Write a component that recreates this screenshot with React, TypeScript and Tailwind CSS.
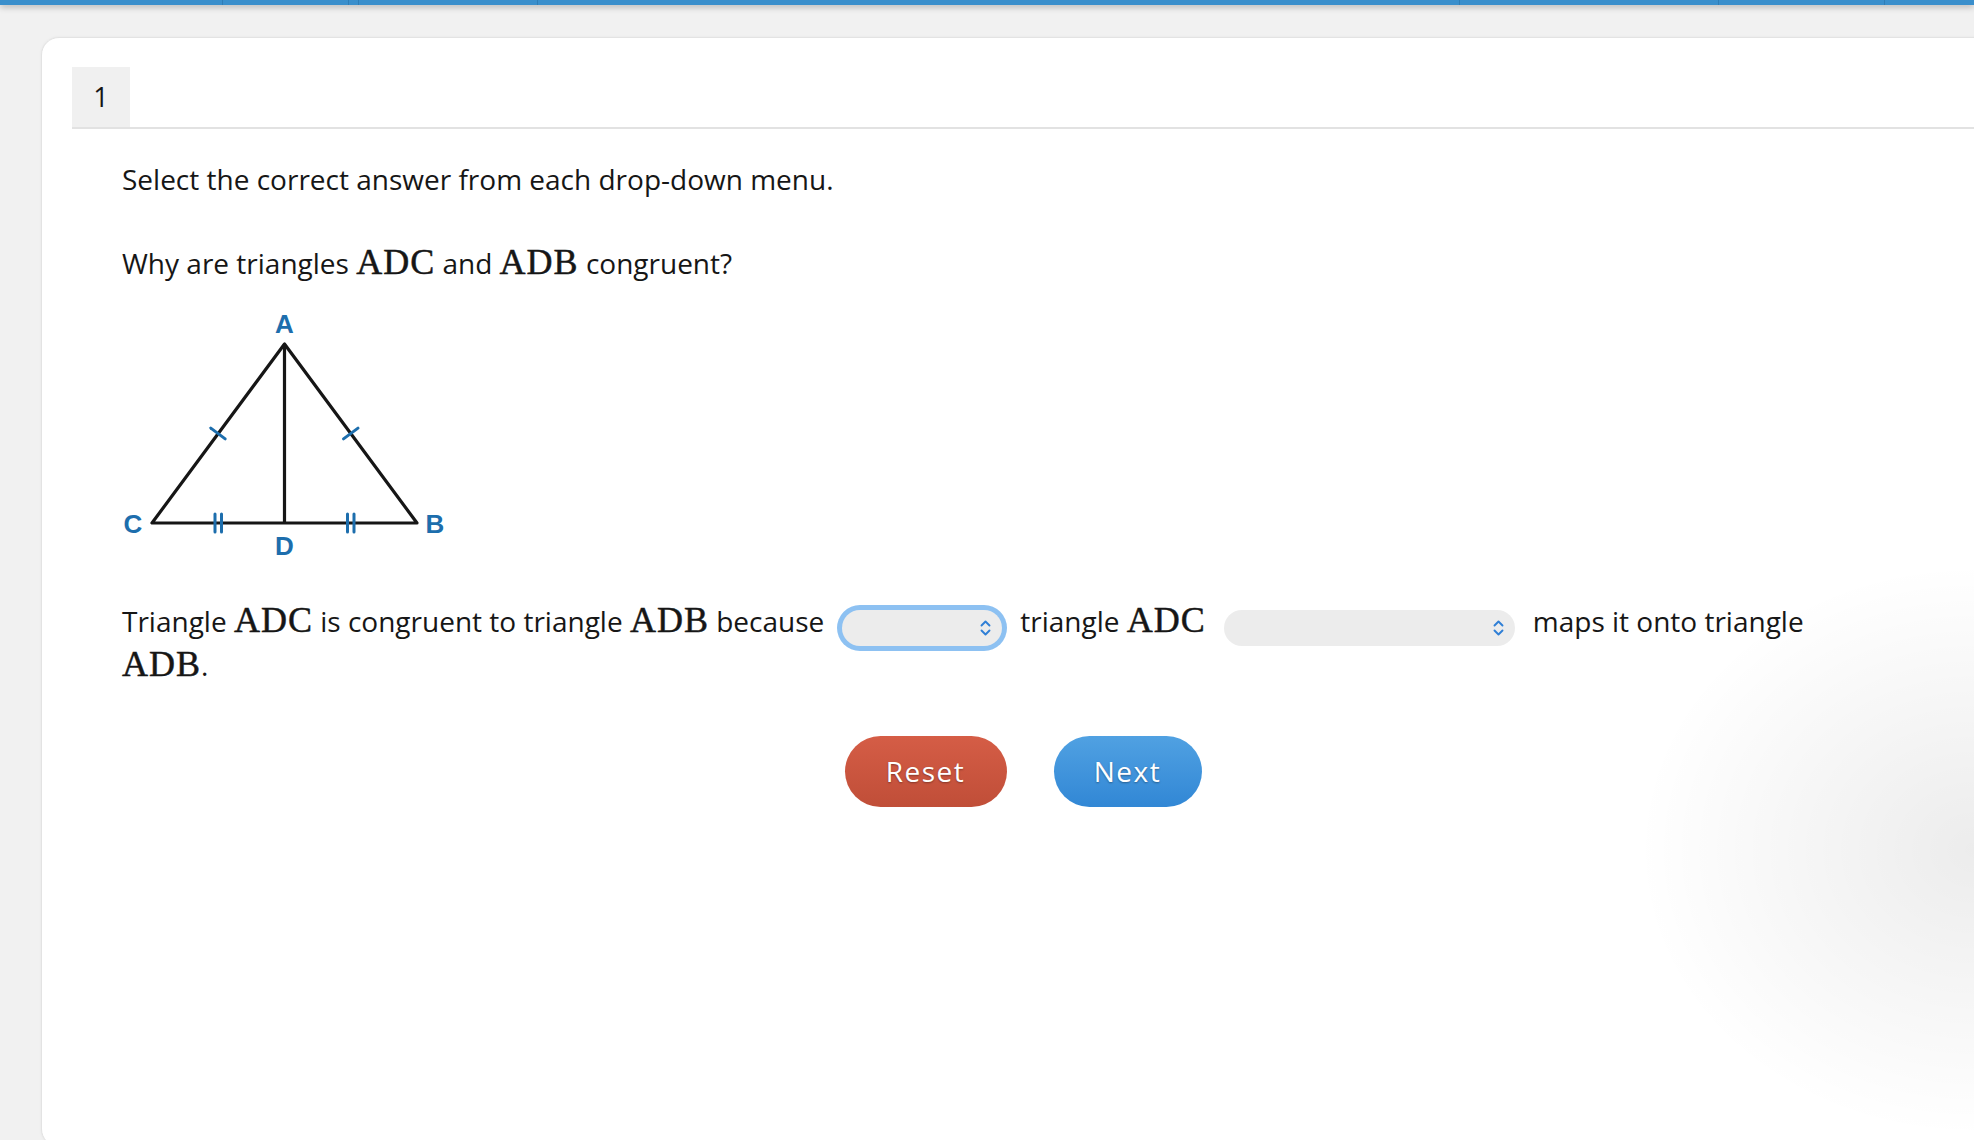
import React from 'react';

const Math: React.FC<{ children: React.ReactNode }> = ({ children }) => (
  <span className="font-['Liberation_Serif',serif] text-[36px] leading-none tracking-[1px] [-webkit-text-stroke:0.5px_#161616]">
    {children}
  </span>
);

const UpDown: React.FC = () => (
  <svg width="13" height="18" viewBox="0 0 13 18" fill="none" stroke="#2f7fd6" strokeWidth="1.9" strokeLinecap="round" strokeLinejoin="round">
    <path d="M2.5 6.5 L6.5 2.5 L10.5 6.5" />
    <path d="M2.5 11.5 L6.5 15.5 L10.5 11.5" />
  </svg>
);

const Dropdown: React.FC<{ width: string; focused?: boolean }> = ({ width, focused }) => (
  <span
    className={
      'mx-[18px] inline-flex h-[36px] items-center justify-end rounded-full bg-[#ececec] pr-[10px] align-[-5px] ' +
      width +
      (focused ? ' ring-[5px] ring-[#8dc1f2]' : '')
    }
  >
    <UpDown />
  </span>
);

const Figure: React.FC = () => (
  <svg width="330" height="258" viewBox="0 0 330 258" className="block">
    <g stroke="#161616" strokeWidth="3.2" strokeLinejoin="round" fill="none">
      <path d="M162.5 41 L30 220 L295 220 Z" />
      <path d="M162.5 41 L162.5 220" />
    </g>
    <g stroke="#1d6ead" strokeWidth="3" strokeLinecap="round">
      <path d="M88.8 125.1 L103.2 135.9" />
      <path d="M221.5 135.9 L236 125.1" />
      <path d="M93 211 L93 229" />
      <path d="M99.5 211 L99.5 229" />
      <path d="M225.5 211 L225.5 229" />
      <path d="M232 211 L232 229" />
    </g>
    <g fill="#1d6ead" fontFamily="'Liberation Sans', Arial, sans-serif" fontWeight="700" fontSize="26" textAnchor="middle">
      <text x="162.5" y="30">A</text>
      <text x="11" y="230">C</text>
      <text x="313" y="230">B</text>
      <text x="162.5" y="252">D</text>
    </g>
  </svg>
);

const barSegments = ['w-[223px]', 'w-[126px]', 'w-[10px]', 'w-[179px]', 'w-[922px]', 'w-[259px]', 'w-[166px]'];

export default function App() {
  return (
    <div className="relative h-[1140px] w-[1974px] overflow-hidden bg-[#f1f1f1] font-['Open_Sans',sans-serif] text-[#161616]">
      <div className="relative z-10 flex h-[5px] bg-[#3a8fcc] shadow-[0_2px_6px_rgba(0,0,0,0.28)]">
        {barSegments.map((w, i) => (
          <div key={i} className={w + ' h-full border-r border-[#2f7db6]'} />
        ))}
      </div>

      <div className="pl-[41px] pt-[32px]">
        <div className="h-[1110px] w-[1972px] rounded-[18px] border border-[#e3e3e3] bg-white pl-[30px] pt-[29px] shadow-[0_0_3px_rgba(0,0,0,0.05)]">
          <div className="flex border-b-2 border-[#e2e2e2]">
            <div className="flex h-[60px] w-[58px] items-center justify-center bg-[#f0f0f0] text-[27px]">1</div>
          </div>

          <div className="pl-[50px] pr-[88px] pt-[31px] text-[28px] leading-[39px]">
            <p>Select the correct answer from each drop-down menu.</p>
            <p className="mt-[45px]">
              Why are triangles <Math>ADC</Math> and <Math>ADB</Math> congruent?
            </p>

            <div className="mt-[20px]">
              <Figure />
            </div>

            <p className="mt-[41px] max-w-[1730px]">
              Triangle <Math>ADC</Math> is congruent to triangle <Math>ADB</Math> because
              <Dropdown width="w-[160px]" focused />
              triangle <Math>ADC</Math>
              <Dropdown width="w-[291px]" />
              maps it onto triangle <Math>ADB</Math>.
            </p>

            <div className="mt-[51px] flex justify-center gap-[47px]">
              <button className="h-[71px] w-[162px] rounded-full bg-gradient-to-b from-[#d55d46] to-[#c04e38] text-[28px] font-medium tracking-[1.5px] text-white [text-shadow:0_1px_2px_rgba(0,0,0,0.35)]">
                Reset
              </button>
              <button className="h-[71px] w-[148px] rounded-full bg-gradient-to-b from-[#50a1e2] to-[#3187d5] text-[28px] font-medium tracking-[1.5px] text-white [text-shadow:0_1px_2px_rgba(0,0,0,0.35)]">
                Next
              </button>
            </div>
          </div>
        </div>
      </div>

      <div className="pointer-events-none absolute right-0 top-[560px] h-[580px] w-[340px] bg-[radial-gradient(ellipse_at_right,rgba(0,0,0,0.075),rgba(0,0,0,0)_70%)]" />
    </div>
  );
}
